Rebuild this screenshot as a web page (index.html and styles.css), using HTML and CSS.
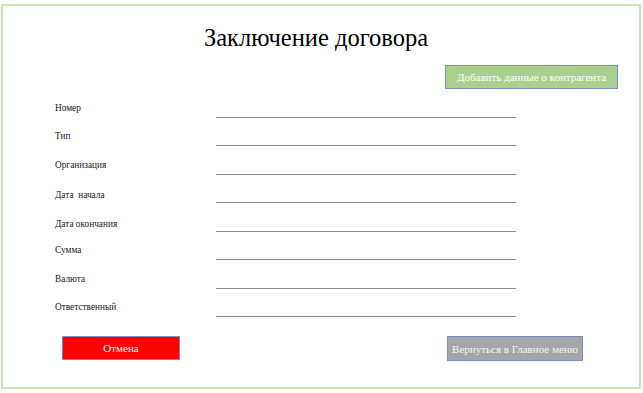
FILE: index.html
```html
<!DOCTYPE html>
<html lang="ru">

<head>
    <meta charset="UTF-8">
    <meta name="viewport" content="width=device-width, initial-scale=1.0">
    <title>Заключение договора</title>
    <link rel="stylesheet" href="styles.css">
</head>

<body>
    <div class="frame">
        <h1>Заключение договора</h1>
        <div class="top-actions">
            <button class="btn btn-green">Добавить данные о контрагента</button>
        </div>
        <div class="fields">
            <div class="row"><span class="label">Номер</span><span class="line"></span></div>
            <div class="row"><span class="label">Тип</span><span class="line"></span></div>
            <div class="row"><span class="label">Организация</span><span class="line"></span></div>
            <div class="row"><span class="label label-low">Дата&nbsp; начала</span><span class="line"></span></div>
            <div class="row"><span class="label label-low">Дата окончания</span><span class="line"></span></div>
            <div class="row"><span class="label">Сумма</span><span class="line"></span></div>
            <div class="row"><span class="label">Валюта</span><span class="line"></span></div>
            <div class="row"><span class="label">Ответственный</span><span class="line"></span></div>
        </div>
        <div class="bottom-actions">
            <button class="btn btn-red">Отмена</button>
            <button class="btn btn-gray">Вернуться в Главное меню</button>
        </div>
    </div>
</body>

</html>
```

FILE: styles.css
```css
body {
    margin: 0;
    background-color: #ffffff;
    font-family: "Liberation Serif", "Times New Roman", serif;
    color: #1a1a1a;
}

.frame {
    box-sizing: border-box;
    width: 640px;
    height: 385px;
    margin: 4px 0 0 1px;
    border: 2px solid #c9e2b8;
    padding-top: 17px;
}

h1 {
    margin: 0;
    padding-right: 10px;
    font-size: 24.5px;
    font-weight: normal;
    line-height: 29px;
    text-align: center;
    color: #000;
}

.top-actions {
    display: flex;
    justify-content: flex-end;
    margin-top: 13px;
    padding-right: 21px;
}

.btn {
    box-sizing: border-box;
    height: 24px;
    padding: 0;
    border: 1px solid #7b8fb8;
    font-family: "Liberation Serif", "Times New Roman", serif;
    color: #ffffff;
    cursor: pointer;
}

.btn-green {
    width: 173px;
    background-color: #a9d18e;
    font-size: 11px;
}

.fields {
    display: flex;
    flex-direction: column;
    padding-left: 52px;
}

.row {
    display: flex;
    align-items: flex-end;
    height: 28.5px;
}

.label {
    width: 161px;
    padding-bottom: 5px;
    font-size: 9.3px;
}

.label-low {
    padding-bottom: 3px;
}

.line {
    width: 300px;
    border-bottom: 1.5px solid #8a8a8a;
}

.bottom-actions {
    display: flex;
    justify-content: space-between;
    margin-top: 19px;
    padding: 0 56px 0 59px;
}

.btn-red {
    width: 118px;
    background-color: #ff0000;
    font-size: 11px;
}

.btn-gray {
    width: 136px;
    height: 25px;
    background-color: #a6a6a6;
    color: #f4f4f4;
    font-size: 11px;
}
```
